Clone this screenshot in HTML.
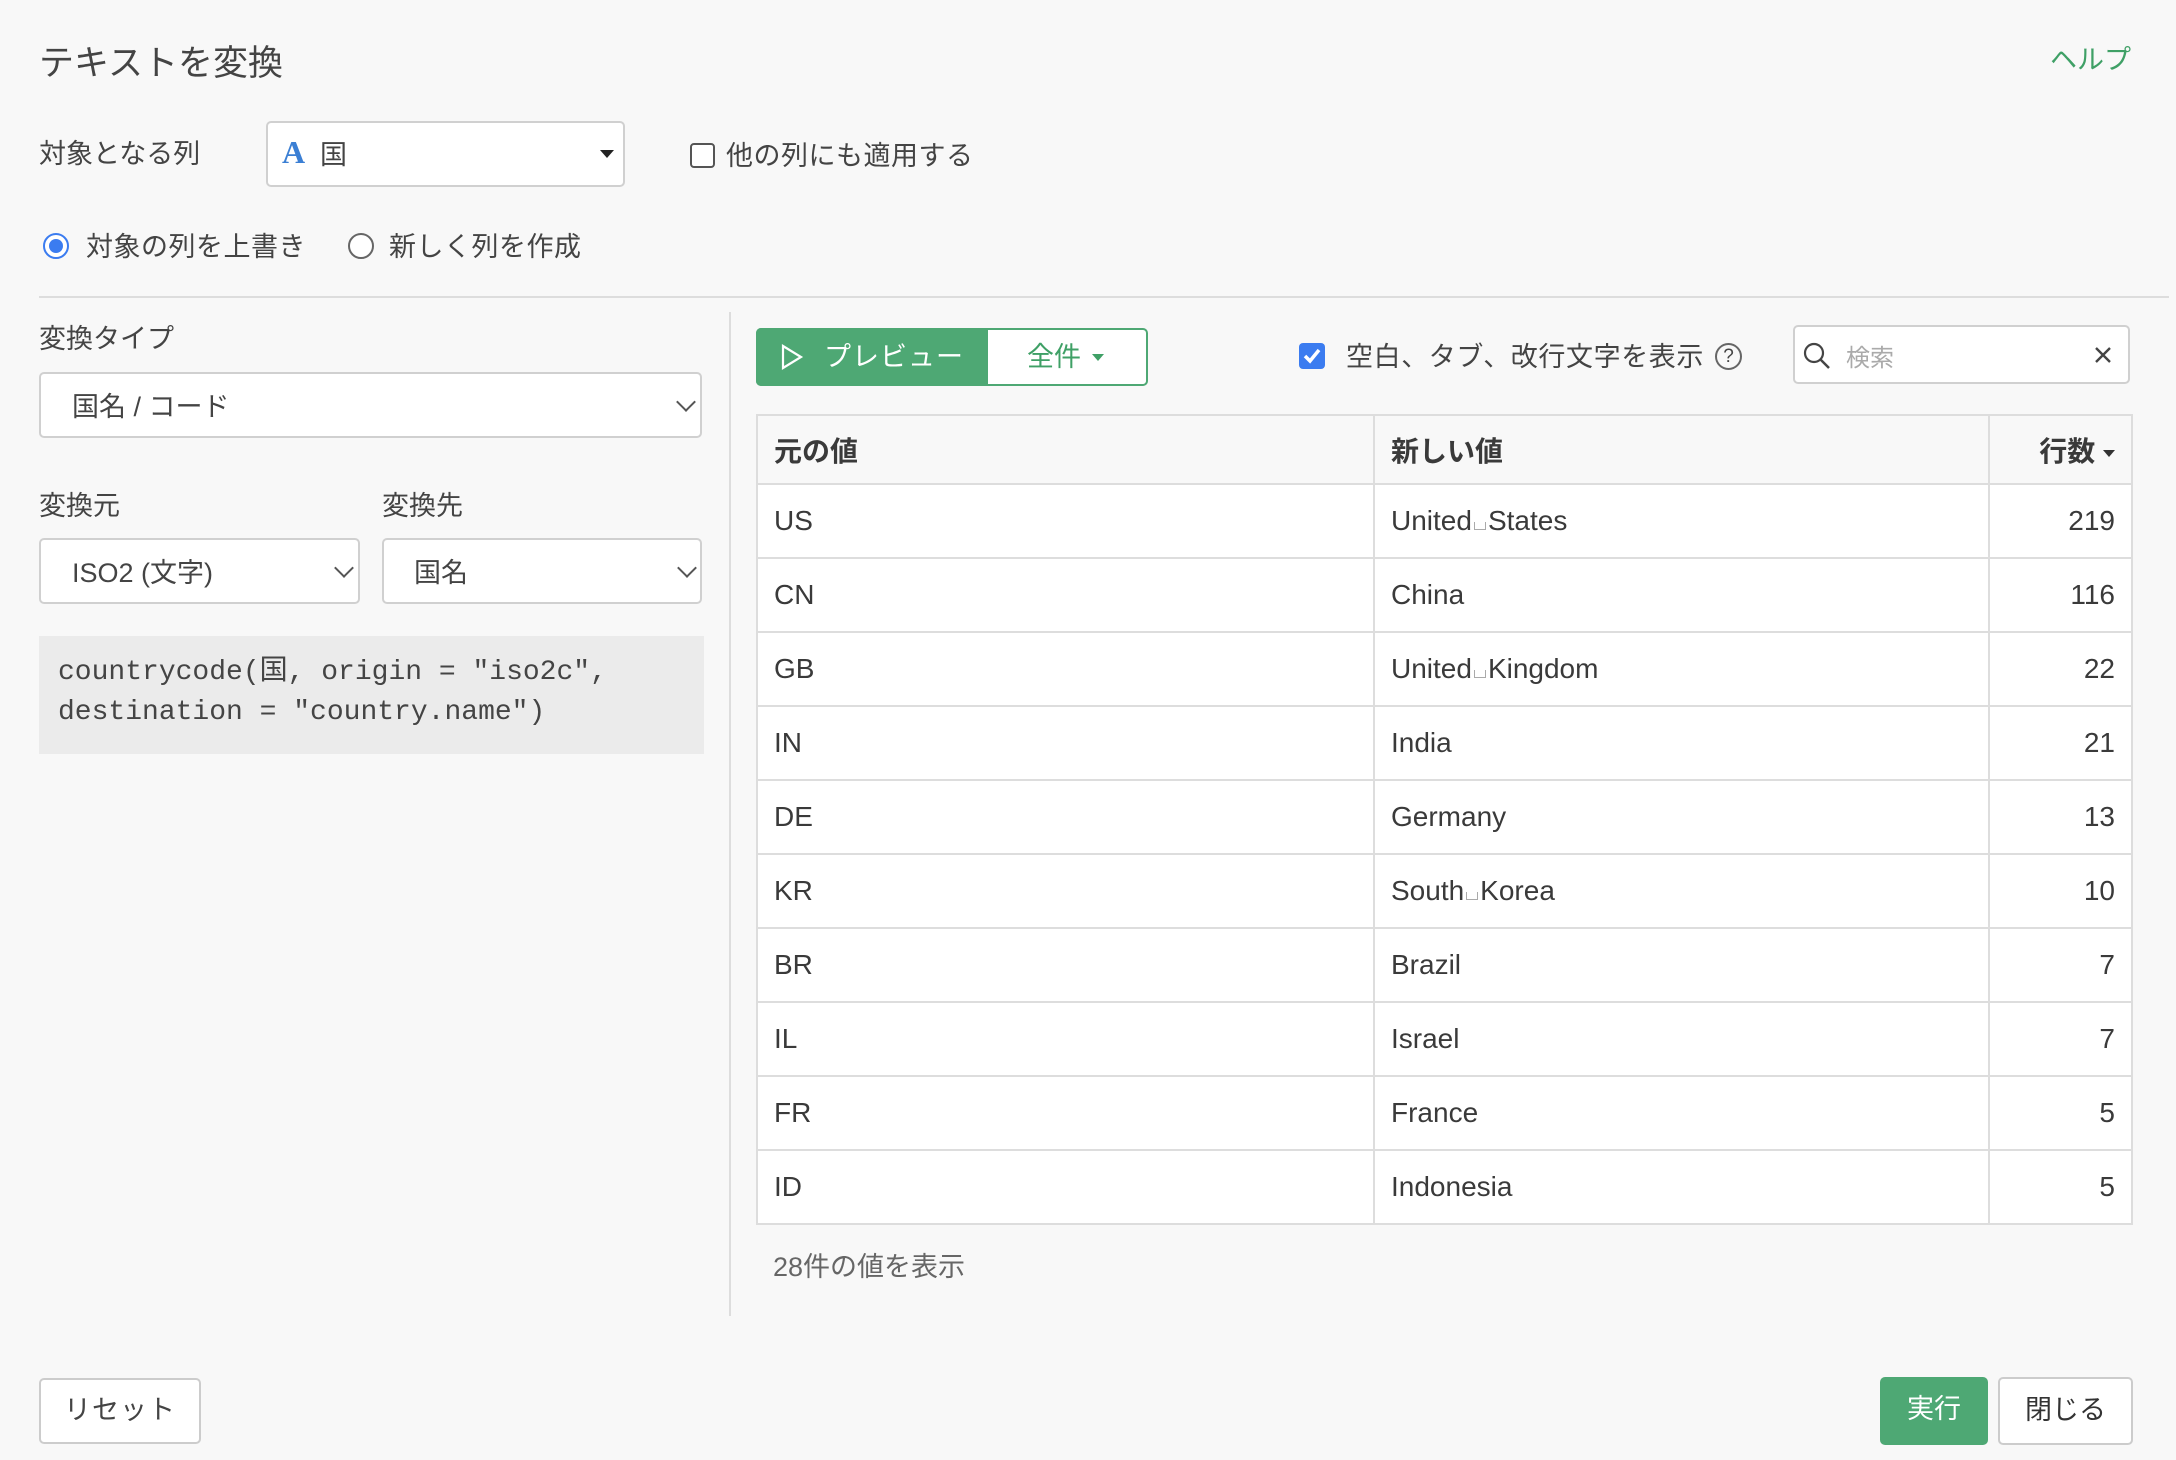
<!DOCTYPE html>
<html><head><meta charset="utf-8">
<style>
*{box-sizing:border-box;margin:0;padding:0}
body{width:2176px;height:1460px;background:#f8f8f8;font-family:"Liberation Sans","Noto Sans CJK JP",sans-serif;color:#444;position:relative;overflow:hidden;font-size:27px}
.a{position:absolute;white-space:nowrap}
.sel{position:absolute;background:#fff;border:2px solid #d0d0d0;border-radius:5px}
.chev{position:absolute;width:14px;height:14px;border-right:2px solid #555;border-bottom:2px solid #555;transform:rotate(45deg)}
table{position:absolute;left:756px;top:414px;width:1377px;border-collapse:collapse;background:#fff;font-size:28px;color:#3a3a3a}
td,th{border:2px solid #ddd;height:74px;padding:0 16px;text-align:left}
th{height:69px;font-weight:bold;background:#f8f8f8}
.n{text-align:right;padding-right:16px}
.sp{display:inline-block;width:12px;height:8px;border:1.5px solid #aaa;border-top:none;margin:0 2px}
.mono{font-family:"Liberation Mono","Noto Sans CJK JP",monospace}
</style></head><body>
<div class="a" style="left:39px;top:35px;font-size:35px;color:#444">テキストを変換</div>
<div class="a" style="left:2050px;top:38px;font-size:27px;color:#3fa066">ヘルプ</div>

<div class="a" style="left:39px;top:132px">対象となる列</div>
<div class="sel" style="left:266px;top:121px;width:359px;height:66px"></div>
<div class="a" style="left:282px;top:134px;font-size:32px;font-weight:bold;color:#3b7fd4;font-family:'Liberation Serif',serif">A</div>
<div class="a" style="left:320px;top:133px">国</div>
<div class="a" style="left:600px;top:150px;width:0;height:0;border-left:7px solid transparent;border-right:7px solid transparent;border-top:8px solid #222"></div>
<div class="a" style="left:690px;top:143px;width:25px;height:25px;border:2px solid #555;border-radius:4px;background:#fff"></div>
<div class="a" style="left:726px;top:134px;letter-spacing:0.5px">他の列にも適用する</div>

<div class="a" style="left:43px;top:233px;width:26px;height:26px;border-radius:50%;border:2px solid #3b7cf0;background:#fff"></div>
<div class="a" style="left:49px;top:239px;width:14px;height:14px;border-radius:50%;background:#3b7cf0"></div>
<div class="a" style="left:86px;top:225px;letter-spacing:0.5px">対象の列を上書き</div>
<div class="a" style="left:348px;top:233px;width:26px;height:26px;border-radius:50%;border:2px solid #666;background:#fff"></div>
<div class="a" style="left:389px;top:225px;letter-spacing:0.5px">新しく列を作成</div>
<div class="a" style="left:39px;top:296px;width:2130px;height:2px;background:#ddd"></div>

<div class="a" style="left:729px;top:312px;width:2px;height:1004px;background:#ddd"></div>

<div class="a" style="left:39px;top:317px">変換タイプ</div>
<div class="sel" style="left:39px;top:372px;width:663px;height:66px"></div>
<div class="a" style="left:72px;top:385px">国名 / コード</div>
<div class="chev" style="left:679px;top:395px"></div>

<div class="a" style="left:39px;top:484px">変換元</div>
<div class="a" style="left:382px;top:484px">変換先</div>
<div class="sel" style="left:39px;top:538px;width:321px;height:66px"></div>
<div class="a" style="left:72px;top:551px">ISO2 (文字)</div>
<div class="chev" style="left:337px;top:561px"></div>
<div class="sel" style="left:382px;top:538px;width:320px;height:66px"></div>
<div class="a" style="left:414px;top:551px">国名</div>
<div class="chev" style="left:680px;top:561px"></div>

<div class="a" style="left:39px;top:636px;width:665px;height:118px;background:#ebebeb"></div>
<div class="a mono" style="left:58px;top:653px;font-size:28px;line-height:40px;color:#444">countrycode(国, origin = "iso2c",<br>destination = "country.name")</div>

<div class="a" style="left:756px;top:328px;width:392px;height:58px;border:2px solid #4ea874;border-radius:5px;background:#fff"></div>
<div class="a" style="left:756px;top:328px;width:232px;height:58px;background:#4ea874;border-radius:5px 0 0 5px"></div>
<svg class="a" style="left:780px;top:344px" width="24" height="26"><path d="M3 2 L21 13 L3 24 Z" fill="none" stroke="#fff" stroke-width="2.2"/></svg>
<div class="a" style="left:824px;top:335px;color:#fff;letter-spacing:1px">プレビュー</div>
<div class="a" style="left:1027px;top:335px;color:#3fa066">全件</div>
<div class="a" style="left:1092px;top:354px;border-left:6px solid transparent;border-right:6px solid transparent;border-top:7px solid #3fa066"></div>

<div class="a" style="left:1299px;top:343px;width:26px;height:26px;border-radius:4px;background:#3b7cf0"></div>
<svg class="a" style="left:1299px;top:343px" width="26" height="26"><path d="M6 13 L11 18 L20 7" fill="none" stroke="#fff" stroke-width="3.5"/></svg>
<div class="a" style="left:1346px;top:335px;letter-spacing:0.6px">空白、タブ、改行文字を表示</div>
<div class="a" style="left:1715px;top:343px;width:27px;height:27px;border-radius:50%;border:2px solid #666;font-size:19px;text-align:center;line-height:23px">?</div>

<div class="sel" style="left:1793px;top:325px;width:337px;height:59px"></div>
<svg class="a" style="left:1802px;top:341px" width="30" height="30"><circle cx="12" cy="12" r="9" fill="none" stroke="#444" stroke-width="2.2"/><path d="M18.5 18.5 L27 27" stroke="#444" stroke-width="2.5"/></svg>
<div class="a" style="left:1846px;top:338px;font-size:24px;color:#aaa">検索</div>
<svg class="a" style="left:2094px;top:346px" width="18" height="18"><path d="M2 2 L16 16 M16 2 L2 16" stroke="#444" stroke-width="2.4"/></svg>

<table>
<tr><th style="width:617px">元の値</th><th style="width:615px">新しい値</th><th class="n">行数 <span style="display:inline-block;border-left:6px solid transparent;border-right:6px solid transparent;border-top:7px solid #333;vertical-align:middle"></span></th></tr>
<tr><td>US</td><td>United<span class="sp"></span>States</td><td class="n">219</td></tr>
<tr><td>CN</td><td>China</td><td class="n">116</td></tr>
<tr><td>GB</td><td>United<span class="sp"></span>Kingdom</td><td class="n">22</td></tr>
<tr><td>IN</td><td>India</td><td class="n">21</td></tr>
<tr><td>DE</td><td>Germany</td><td class="n">13</td></tr>
<tr><td>KR</td><td>South<span class="sp"></span>Korea</td><td class="n">10</td></tr>
<tr><td>BR</td><td>Brazil</td><td class="n">7</td></tr>
<tr><td>IL</td><td>Israel</td><td class="n">7</td></tr>
<tr><td>FR</td><td>France</td><td class="n">5</td></tr>
<tr><td>ID</td><td>Indonesia</td><td class="n">5</td></tr>
</table>
<div class="a" style="left:773px;top:1245px;color:#666">28件の値を表示</div>

<div class="a" style="left:39px;top:1378px;width:162px;height:66px;border:2px solid #ccc;border-radius:5px;background:#fff;text-align:center;line-height:60px;letter-spacing:1px">リセット</div>
<div class="a" style="left:1880px;top:1377px;width:108px;height:68px;border-radius:5px;background:#4ea874;color:#fff;text-align:center;line-height:64px">実行</div>
<div class="a" style="left:1998px;top:1377px;width:135px;height:68px;border:2px solid #ccc;border-radius:5px;background:#fff;text-align:center;line-height:62px;color:#333">閉じる</div>
</body></html>
